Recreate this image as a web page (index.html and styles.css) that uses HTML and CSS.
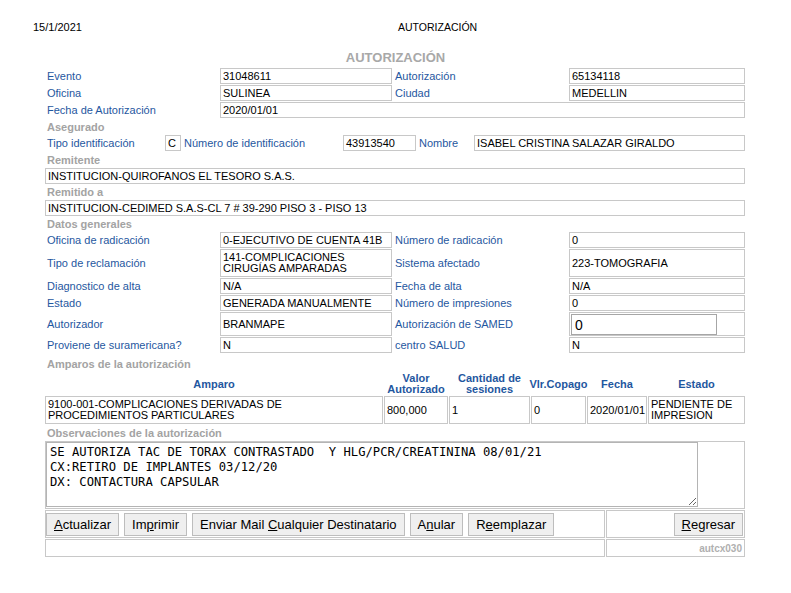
FILE: index.html
```html
<!DOCTYPE html>
<html lang="es">
<head>
<meta charset="utf-8">
<title>Autorización</title>
<link rel="stylesheet" href="styles.css">
</head>
<body>
<div class="top">
  <span class="date">15/1/2021</span>
  <span class="toptitle">AUTORIZACIÓN</span>
</div>
<div class="title">AUTORIZACIÓN</div>

<div class="form">
  <div class="row4">
    <div class="lbl">Evento</div><div class="box">31048611</div>
    <div class="lbl">Autorización</div><div class="box">65134118</div>
  </div>
  <div class="row4">
    <div class="lbl">Oficina</div><div class="box">SULINEA</div>
    <div class="lbl">Ciudad</div><div class="box">MEDELLIN</div>
  </div>
  <div class="row2">
    <div class="lbl">Fecha de Autorización</div><div class="box">2020/01/01</div>
  </div>

  <div class="sec h15">Asegurado</div>
  <div class="rowid">
    <div class="lbl">Tipo identificación</div><div class="box">C</div>
    <div class="lbl">Número de identificación</div><div class="box">43913540</div>
    <div class="lbl">Nombre</div><div class="box">ISABEL CRISTINA SALAZAR GIRALDO</div>
  </div>

  <div class="sec h15">Remitente</div>
  <div class="box full">INSTITUCION-QUIROFANOS EL TESORO S.A.S.</div>
  <div class="sec h14">Remitido a</div>
  <div class="box full">INSTITUCION-CEDIMED S.A.S-CL 7 # 39-290 PISO 3 - PISO 13</div>

  <div class="sec h14">Datos generales</div>
  <div class="row4">
    <div class="lbl">Oficina de radicación</div><div class="box">0-EJECUTIVO DE CUENTA 41B</div>
    <div class="lbl">Número de radicación</div><div class="box">0</div>
  </div>
  <div class="row4 tall">
    <div class="lbl">Tipo de reclamación</div><div class="box two">141-COMPLICACIONES<br>CIRUGÍAS AMPARADAS</div>
    <div class="lbl">Sistema afectado</div><div class="box">223-TOMOGRAFIA</div>
  </div>
  <div class="row4">
    <div class="lbl">Diagnostico de alta</div><div class="box">N/A</div>
    <div class="lbl">Fecha de alta</div><div class="box">N/A</div>
  </div>
  <div class="row4">
    <div class="lbl">Estado</div><div class="box">GENERADA MANUALMENTE</div>
    <div class="lbl">Número de impresiones</div><div class="box">0</div>
  </div>
  <div class="row4 mid">
    <div class="lbl">Autorizador</div><div class="box">BRANMAPE</div>
    <div class="lbl">Autorización de SAMED</div>
    <div class="box inbox"><input class="samed" type="text" value="0"></div>
  </div>
  <div class="row4">
    <div class="lbl">Proviene de suramericana?</div><div class="box">N</div>
    <div class="lbl">centro SALUD</div><div class="box">N</div>
  </div>

  <div class="sec h16">Amparos de la autorización</div>
  <div class="amp head">
    <div class="th">Amparo</div>
    <div class="th">Valor<br>Autorizado</div>
    <div class="th">Cantidad de<br>sesiones</div>
    <div class="th">Vlr.Copago</div>
    <div class="th">Fecha</div>
    <div class="th">Estado</div>
  </div>
  <div class="amp data">
    <div class="box two">9100-001-COMPLICACIONES DERIVADAS DE<br>PROCEDIMIENTOS PARTICULARES</div>
    <div class="box">800,000</div>
    <div class="box">1</div>
    <div class="box">0</div>
    <div class="box">2020/01/01</div>
    <div class="box two">PENDIENTE DE<br>IMPRESION</div>
  </div>

  <div class="sec h15">Observaciones de la autorización</div>
  <div class="obs">
    <textarea class="ta">SE AUTORIZA TAC DE TORAX CONTRASTADO  Y HLG/PCR/CREATININA 08/01/21
CX:RETIRO DE IMPLANTES 03/12/20
DX: CONTACTURA CAPSULAR</textarea>
  </div>

  <div class="bar">
    <div class="cell btns">
      <button class="btn"><u>A</u>ctualizar</button>
      <button class="btn">Im<u>p</u>rimir</button>
      <button class="btn">Enviar Mail <u>C</u>ualquier Destinatario</button>
      <button class="btn">A<u>n</u>ular</button>
      <button class="btn">R<u>e</u>emplazar</button>
    </div>
    <div class="cell right">
      <button class="btn"><u>R</u>egresar</button>
    </div>
  </div>
  <div class="bar foot">
    <div class="cell"></div>
    <div class="cell right code">autcx030</div>
  </div>
</div>
</body>
</html>
```

FILE: styles.css
```css
* { box-sizing: border-box; }

body {
  margin: 0;
  background: #ffffff;
  color: #000000;
  font-family: "Liberation Sans", Arial, sans-serif;
  font-size: 11px;
}

.top {
  display: flex;
  padding: 20px 0 0 33px;
  line-height: 14px;
  height: 34px;
}

.date { width: 365px; }

.toptitle { font-size: 10.5px; }

.title {
  margin-top: 16px;
  height: 16px;
  line-height: 16px;
  text-align: center;
  font-size: 13px;
  font-weight: bold;
  color: #a8a8a8;
}

.form {
  width: 700px;
  margin: 2px 0 0 45px;
  display: flex;
  flex-direction: column;
  gap: 1px;
}

.row4, .row2, .rowid, .amp, .bar {
  display: grid;
  gap: 1px;
  height: 16px;
}

.row4 { grid-template-columns: 174px 172px 175px 176px; }
.row2 { grid-template-columns: 174px 525px; }
.rowid { grid-template-columns: 119px 16px 160px 73px 56px 271px; }

.row4.tall { height: 28px; }
.row4.mid { height: 24px; }

.lbl {
  display: flex;
  align-items: center;
  padding-left: 2px;
  color: #1f57a0;
  white-space: nowrap;
}

.box {
  display: flex;
  align-items: center;
  border: 1px solid #c8c8c8;
  padding: 0 1px 0 2px;
  line-height: 12px;
  white-space: nowrap;
  overflow: hidden;
}

.box.two { line-height: 11px; }

.box.full { height: 16px; }

.sec {
  display: flex;
  align-items: center;
  padding-left: 2px;
  color: #a3a3a3;
  font-weight: bold;
}

.h16 { height: 17px; padding-top: 2px; }
.h15 { height: 15px; }
.h14 { height: 14px; }

.inbox { padding: 1px; align-items: flex-start; }

.samed {
  width: 146px;
  height: 21px;
  margin: 0;
  border: 1px solid #a6a6a6;
  padding: 0 3px;
  font-family: "Liberation Sans", Arial, sans-serif;
  font-size: 14px;
  color: #000;
  background: #fff;
}

.amp { grid-template-columns: 338px 64px 81px 55px 60px 97px; }
.amp.head { height: 23px; padding-top: 1px; }
.amp.data { height: 28px; }

.th {
  display: flex;
  align-items: center;
  justify-content: center;
  text-align: center;
  font-weight: bold;
  color: #1f57a0;
  line-height: 11px;
}

.obs {
  height: 68px;
  border: 1px solid #c8c8c8;
}

.ta {
  display: block;
  width: 652px;
  height: 65px;
  margin: 0;
  border: 1px solid #b4b4b4;
  padding: 2px 3px;
  font-family: "DejaVu Sans Mono", monospace;
  font-size: 12.2px;
  line-height: 15px;
  color: #000;
  background: #fff;
  resize: both;
  overflow: hidden;
}

.bar { grid-template-columns: 560px 139px; height: 28px; }
.bar.foot { height: 18px; }

.cell {
  border: 1px solid #c8c8c8;
  display: flex;
  align-items: center;
}

.btns { gap: 5px; padding: 0; }
.right { justify-content: flex-end; padding-right: 1px; }

.btn {
  height: 23px;
  margin: 0;
  padding: 0 7px;
  border: 1px solid #bdbdbd;
  border-radius: 0;
  background: #efefef;
  color: #000;
  font-family: "Liberation Sans", Arial, sans-serif;
  font-size: 13px;
  line-height: 21px;
}

.code {
  font-size: 10px;
  font-weight: bold;
  color: #b0b0b0;
  padding-right: 2px;
}
```
